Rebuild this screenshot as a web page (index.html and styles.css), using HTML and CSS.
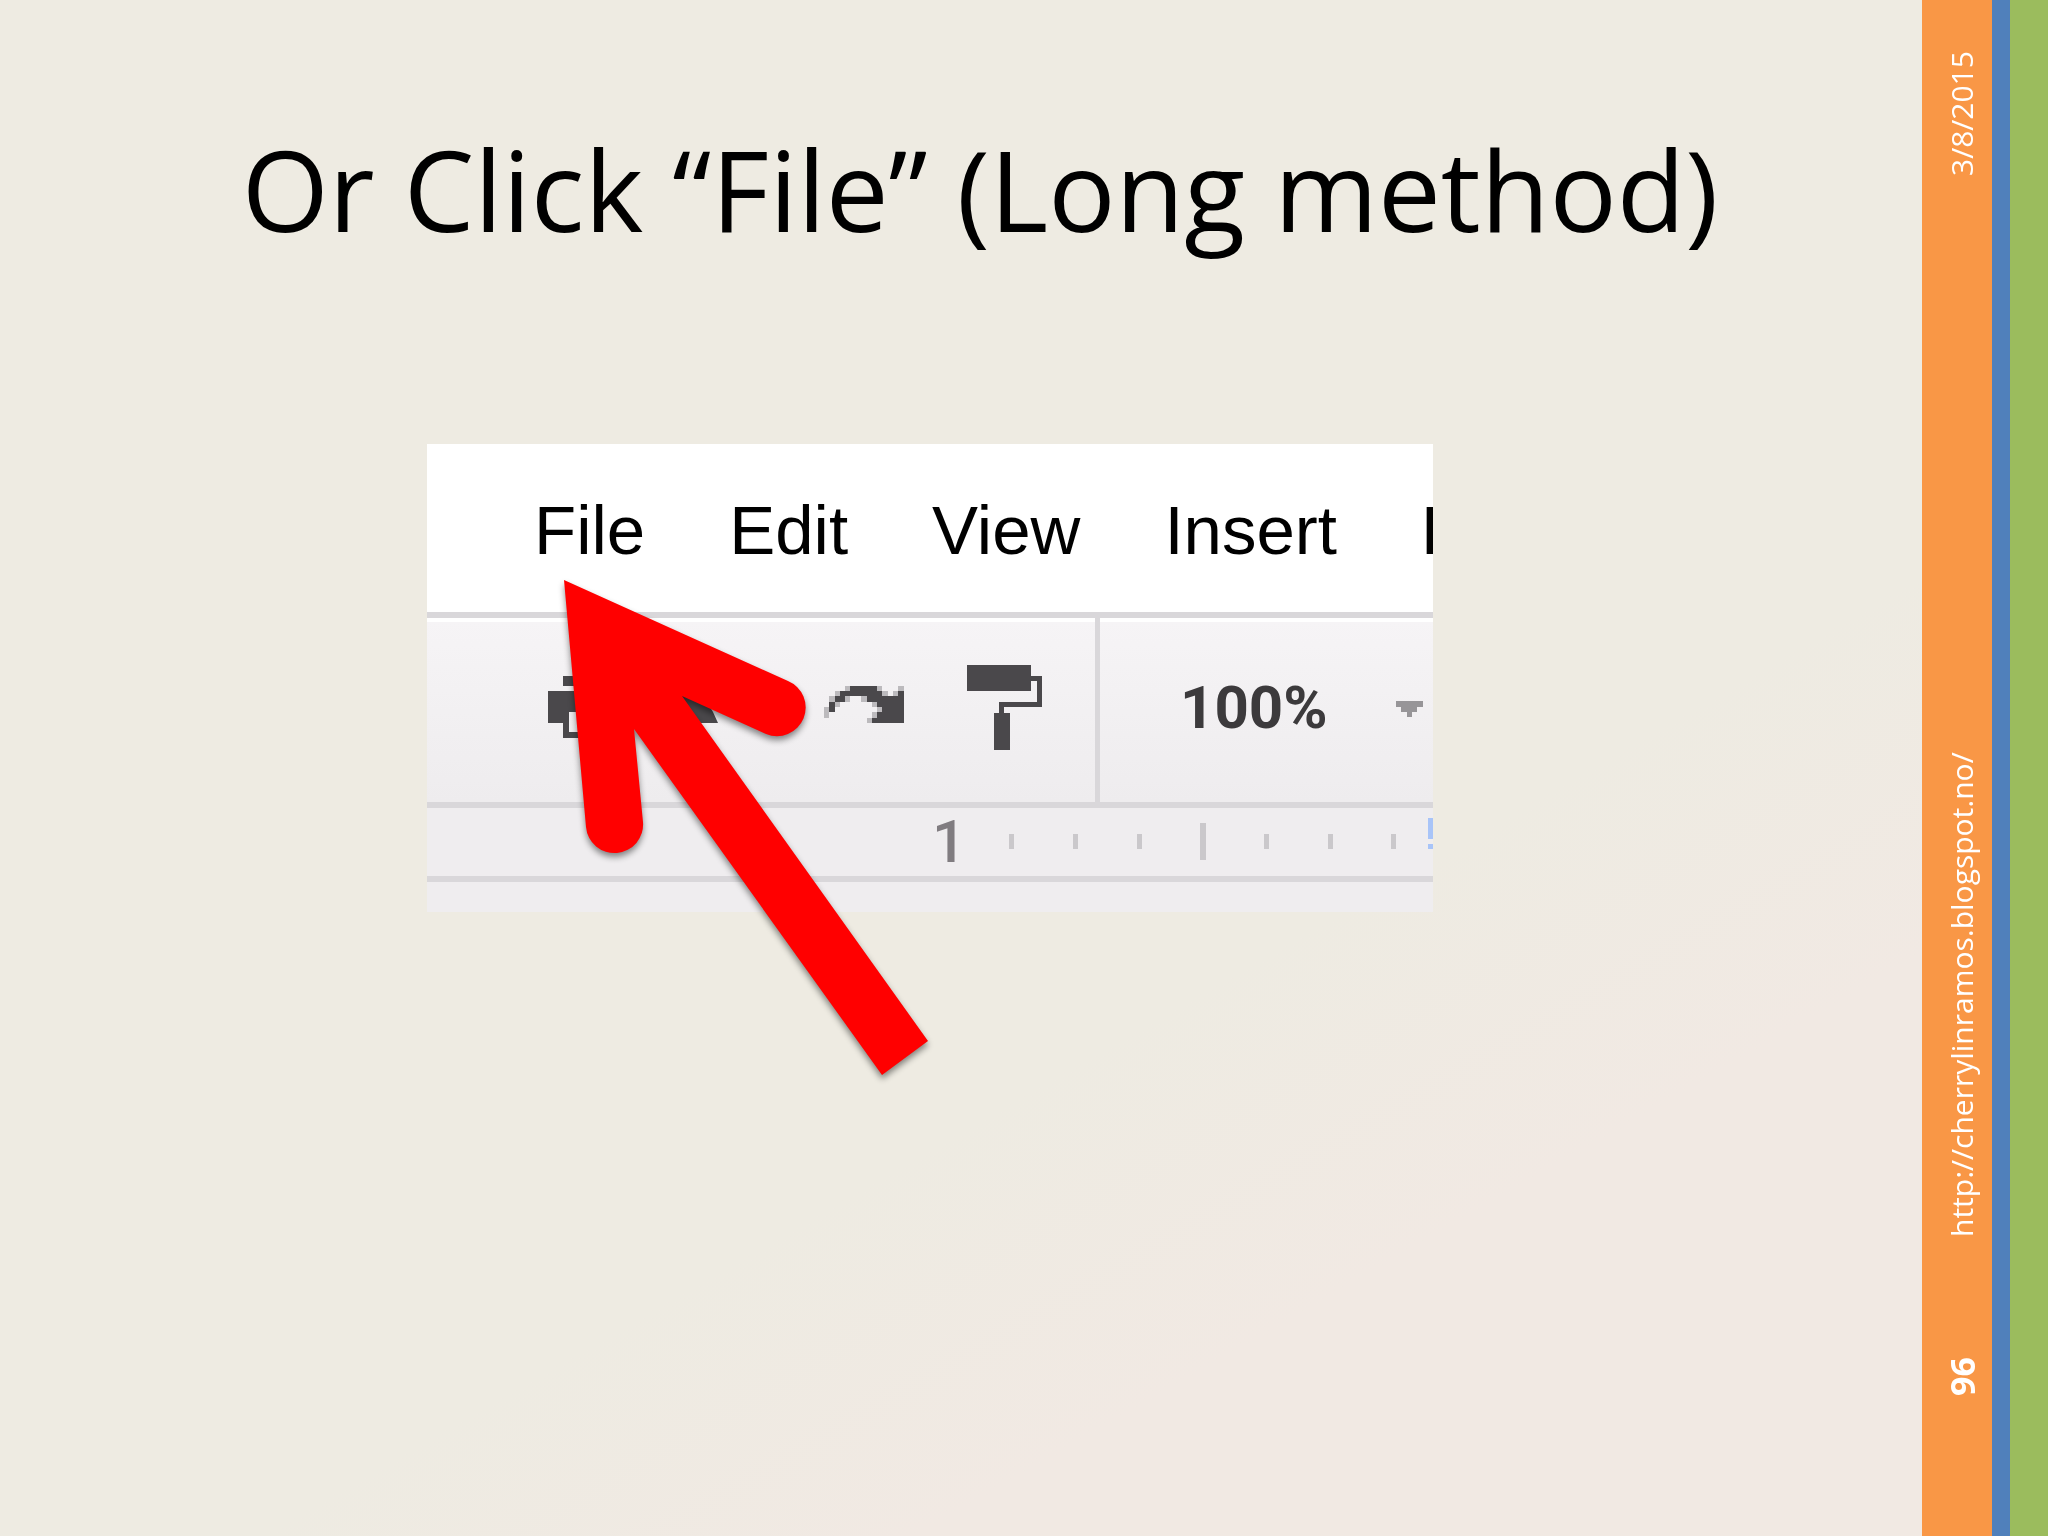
FILE: index.html
```html
<!DOCTYPE html>
<html lang="en">
<head>
    <meta charset="UTF-8">
    <meta name="viewport" content="width=device-width, initial-scale=1.0">
    <link rel="stylesheet" href="styles.css">
    <title>Or Click File</title>
</head>
<body>
    <div class="slide">
        <main class="content">
            <h1>Or Click “File” (Long method)</h1>

            <div class="figure">
                <div class="editor">
                    <nav class="menubar">
                        <button type="button">File</button>
                        <button type="button">Edit</button>
                        <button type="button">View</button>
                        <button type="button">Insert</button>
                        <button type="button">Format</button>
                    </nav>

                    <div class="toolbar">
                        <button type="button" class="print" aria-label="Print">
                            <svg width="64" height="90" viewBox="0 0 64 90" fill="#4a484b">
                                <path d="M15 14h34v10H15zM0 29h64v32H49V50H21v20h22v6H15V61H0z"/>
                            </svg>
                        </button>
                        <button type="button" class="undo" aria-label="Undo">
                            <svg width="80" height="90" viewBox="0 0 80 90" fill="#4a484b">
                                <path d="M34 28h16l16 10 7 12 5 11H52z"/>
                            </svg>
                        </button>
                        <button type="button" class="redo" aria-label="Redo">
                            <svg width="80" height="90" viewBox="0 0 80 90" fill="#4a484b">
                                <path d="M21 24h5v5h-5zM53 24h5v5h-5zM74 24h6v5h-6zM11 29h5v5h-5zM58 29h6v5h-6zM69 29h5v5h-5zM21 34h5v6h-5zM37 34h6v6h-6zM5 34h6v6H5zM48 40h5v5h-5zM0 45h5v11H0zM11 40h5v5h-5zM53 45h5v5h-5zM48 50h5v6h-5zM43 56h5v5h-5z" fill="#bcbabd"/>
                                <path d="M26 24h27v5h5v5h16v-5h6v32H48v-5h5v-6h5v-5h-5v-5H43v-6H21v6H11v10H5V40h6v-6h5v-5h10z"/>
                            </svg>
                        </button>
                        <button type="button" class="paint" aria-label="Paint format">
                            <svg width="76" height="90" viewBox="0 0 76 90" fill="#4a484b">
                                <path d="M0 3h64v11h11v31H37v6h6v37H27V51h5V40h38V19h-6v10H0z"/>
                            </svg>
                        </button>
                        <label class="zoom">
                            <select aria-label="Zoom">
                                <option>100%</option>
                            </select>
                            <svg width="28" height="20" viewBox="0 -4 28 20" fill="#979598">
                                <path d="M0 0h27v6h-6v5h-5v5h-5v-5H5V6H0z"/>
                            </svg>
                        </label>
                    </div>

                    <div class="ruler">
                        <span>1</span>
                        <svg width="424" height="68" viewBox="0 0 424 68" fill="#cac8cb">
                            <path d="M0 26h5v15H0zM64 26h5v15h-5zM128 26h5v15h-5zM191 15h6v37h-6zM255 26h5v15h-5zM319 26h5v15h-5zM382 26h5v15h-5z"/>
                            <path d="M419 10h5v21h-5zM419 36h5v5h-5z" fill="#a8c4f8"/>
                        </svg>
                    </div>

                    <div class="page-edge"></div>
                </div>

                <svg class="arrow" width="400" height="520" viewBox="550 570 400 520">
                    <path fill="#f00" d="M564 580L788 681A28 28 0 0 1 766 734L682 696L928 1041L882 1075L634 729L643 822A28 28 0 0 1 586 827Z"/>
                </svg>
            </div>
        </main>

        <aside class="sidebar">
            <span class="number">96</span>
            <a href="http://cherrylinramos.blogspot.no/">http://cherrylinramos.blogspot.no/</a>
            <time datetime="2015-03-08">3/8/2015</time>
        </aside>
        <div class="stripe blue"></div>
        <div class="stripe green"></div>
    </div>
</body>
</html>
```
FILE: styles.css
```css
body {
    margin: 0;
    font-family: "Open Sans", sans-serif;
}

.slide {
    display: flex;
    min-height: 100vh;
    background: linear-gradient(150deg, #eeebe2 62%, #f1e9e3 76%);
}

.content {
    flex: 1;
    min-width: 0;
}

h1 {
    margin: 0;
    padding: 122px 0 0 38px;
    font-size: 112px;
    font-weight: normal;
    line-height: 134px;
    text-align: center;
    color: #000;
}

.figure {
    position: relative;
    width: 1006px;
    max-width: 100%;
    margin: 188px 0 0 427px;
}

.editor {
    overflow: hidden;
    font-family: "Liberation Sans", Arial, sans-serif;
    background-color: #efedef;
}

.editor button,
.editor select {
    flex: none;
    padding: 0;
    border: none;
    background: none;
    font: inherit;
    color: inherit;
}

.editor svg {
    display: block;
}

.menubar {
    display: flex;
    align-items: center;
    gap: 84px;
    height: 164px;
    padding: 4px 0 0 107px;
    border-bottom: 6px solid #d9d7da;
    background-color: #fff;
    font-size: 69px;
    color: #000;
}

.toolbar {
    display: flex;
    align-items: center;
    height: 170px;
    padding: 0 0 10px 121px;
    border-top: 4px solid #fff;
    border-bottom: 6px solid #d9d7da;
    background: linear-gradient(#f6f4f6, #eeecee);
}

.undo {
    margin-left: 28px;
}

.redo {
    margin-left: 104px;
}

.paint {
    margin-left: 63px;
}

.zoom {
    display: flex;
    flex: none;
    align-items: center;
    align-self: stretch;
    gap: 66px;
    margin: -4px 0 -10px 52px;
    padding: 0 0 6px 80px;
    border-left: 5px solid #d9d7da;
    font-family: Roboto, sans-serif;
    font-size: 60px;
    font-weight: bold;
    color: #3c3a3c;
}

.editor select {
    appearance: none;
    width: 150px;
}

.ruler {
    display: flex;
    align-items: center;
    height: 68px;
    padding-left: 505px;
    border-bottom: 6px solid #d9d7da;
    font-family: Roboto, sans-serif;
    font-size: 60px;
    font-weight: 500;
    line-height: 64px;
    color: #807c80;
}

.ruler span {
    width: 32px;
}

.ruler svg {
    flex: none;
    margin-left: 45px;
}

.page-edge {
    height: 30px;
}

/* lies over the toolbar and runs out below it */
.arrow {
    position: absolute;
    top: 126px;
    left: 123px;
    filter: drop-shadow(0 4px 3px rgba(0, 0, 0, 0.45));
}

.sidebar {
    display: flex;
    box-sizing: border-box;
    width: 70px;
    padding: 140px 10px 51px 0;
    writing-mode: vertical-rl;
    transform: rotate(180deg);
    align-items: center;
    background-color: #f99746;
    font-size: 30px;
    line-height: 36px;
    color: #fff;
}

.sidebar a {
    margin-top: 120px;
    color: inherit;
    text-decoration: none;
}

.sidebar time {
    margin-top: auto;
}

.number {
    font-size: 34px;
    font-weight: bold;
}

.stripe.blue {
    width: 18px;
    background-color: #5080bb;
}

.stripe.green {
    width: 38px;
    background-color: #9bbc5d;
}
```
